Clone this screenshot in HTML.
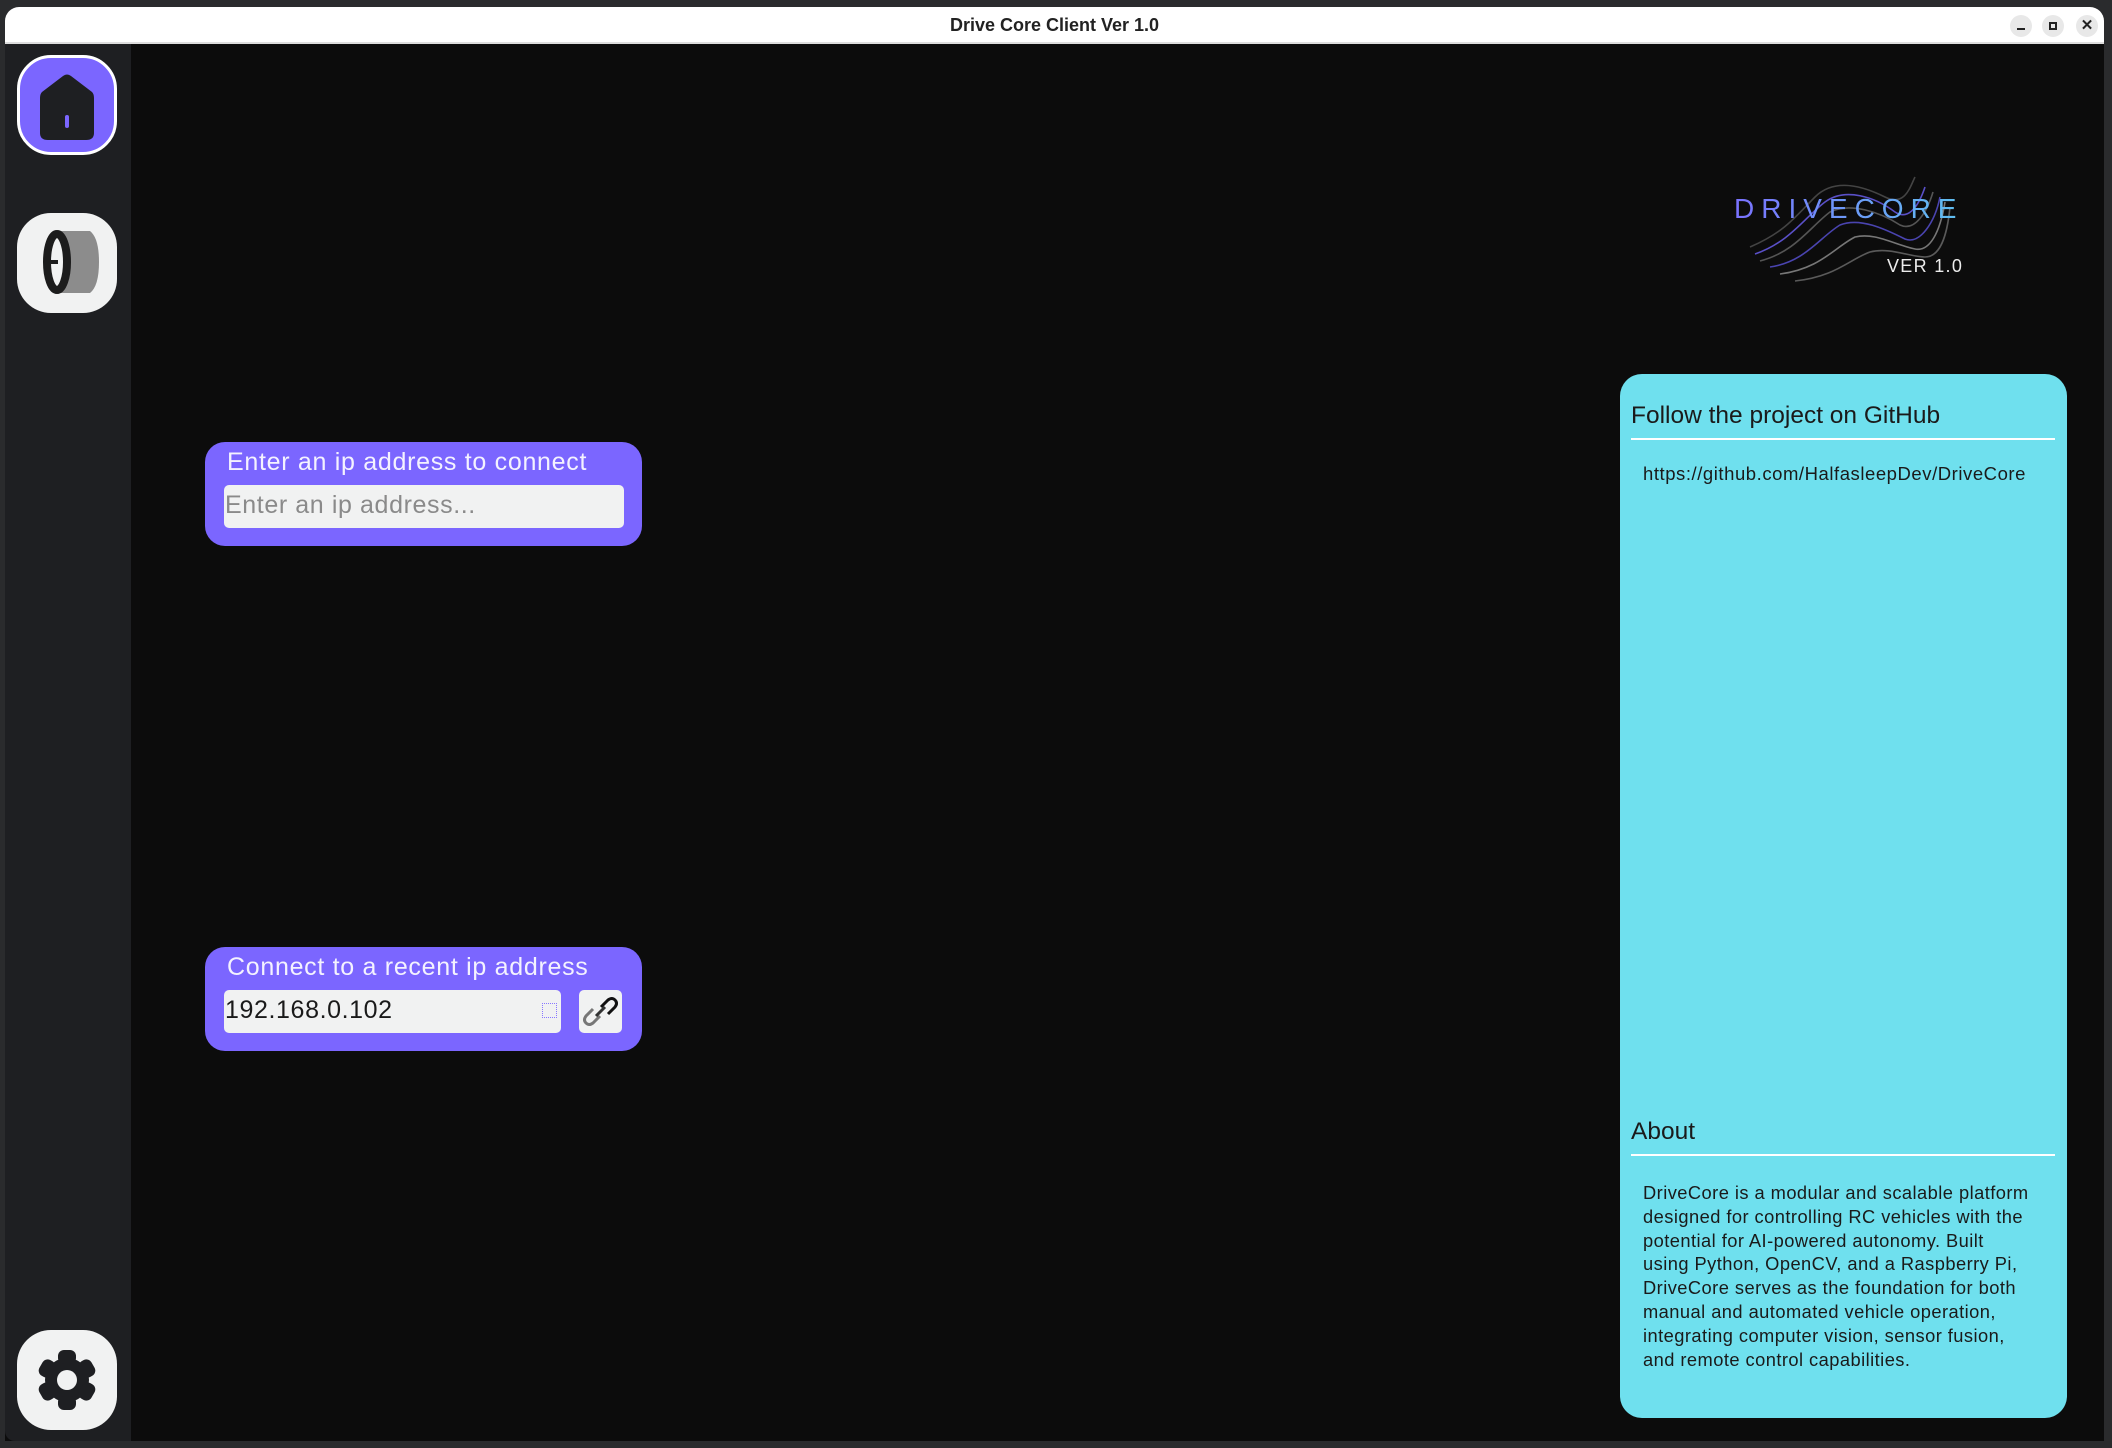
<!DOCTYPE html>
<html><head><meta charset="utf-8"><style>
*{margin:0;padding:0;box-sizing:border-box}
body{width:2112px;height:1448px;background:#2a2b2d;position:relative;overflow:hidden;font-family:"Liberation Sans",sans-serif}
.abs{position:absolute}
.win{left:5px;top:7px;width:2099px;height:1434px;background:#0c0c0c;border-radius:14px 14px 0 0;overflow:hidden}
.title{left:0;top:0;width:100%;height:37px;background:#fff;border-bottom:2px solid #ddd}
.title span{position:absolute;left:0;right:0;top:8px;text-align:center;font-weight:bold;font-size:18px;color:#222}
.wb{width:22px;height:22px;border-radius:50%;background:#e8e8e8;top:8px}
.side{left:0;top:37px;width:126px;height:1397px;background:#1e1f22;border-radius:0 0 0 10px}
.btn{width:100px;height:100px;border-radius:34px;left:12px;background:#f1f2f2}
.card{background:#7b66ff;border-radius:20px;left:200px;width:437px;height:104px}
.card .lb{position:absolute;left:22px;top:6px;color:#f4f2ff;font-size:25px;letter-spacing:0.7px}
.inp{position:absolute;left:19px;top:43px;height:43px;background:#f1f2f2;border-radius:5px;font-size:25px;padding:6px 1px;letter-spacing:0.6px}
.panel{left:1615px;top:367px;width:447px;height:1044px;background:#6fe0ee;border-radius:22px;color:#1a1a1a}
.panel h2{position:absolute;left:11px;font-weight:normal;font-size:24.5px}
.panel hr{position:absolute;left:11px;width:424px;border:0;border-top:2px solid #fff}
</style></head><body>
<div class="abs win">
 <div class="abs title"><span>Drive Core Client Ver 1.0</span>
  <div class="abs wb" style="left:2005px"><div class="abs" style="left:7px;top:13px;width:8px;height:2px;background:#222"></div></div>
  <div class="abs wb" style="left:2037px"><div class="abs" style="left:7px;top:7px;width:8px;height:8px;border:2px solid #222"></div></div>
  <div class="abs wb" style="left:2071px;text-align:center;font-size:15px;font-weight:bold;line-height:22px;color:#222">✕</div>
 </div>
 <div class="abs side">
  <div class="abs btn" style="top:11px;background:#7b66ff;border:3px solid #fff">
   <svg class="abs" style="left:0;top:0" width="94" height="94" viewBox="0 0 94 94"><path d="M22 34 L43 18 Q47 15 51 18 L72 34 Q74 36 74 40 L74 75 Q74 82 66 82 L28 82 Q20 82 20 75 L20 40 Q20 36 22 34Z" fill="#1e1f22"/><rect x="45" y="57" width="4" height="13" rx="2" fill="#7b66ff"/></svg>
  </div>
  <div class="abs btn" style="top:169px">
   <svg class="abs" style="left:0;top:0" width="100" height="100" viewBox="0 0 100 100"><path d="M42 18 L73 18 Q82 25 82 49 Q82 73 73 80 L42 80Z" fill="#8c8c8c"/><ellipse cx="40" cy="49" rx="10" ry="28" fill="#f1f2f2" stroke="#1c1c1c" stroke-width="8"/><rect x="33" y="47" width="8" height="4" fill="#1c1c1c"/></svg>
  </div>
  <div class="abs btn" style="top:1286px">
   <svg class="abs" style="left:0;top:0" width="100" height="100" viewBox="0 0 100 100"><g fill="#1e1f22"><circle cx="50" cy="50" r="22"/><g id="t"><rect x="41" y="20" width="18" height="14" rx="6"/><rect x="41" y="66" width="18" height="14" rx="6"/></g><use href="#t" transform="rotate(60 50 50)"/><use href="#t" transform="rotate(120 50 50)"/></g><circle cx="50" cy="50" r="10" fill="#f1f2f2"/></svg>
  </div>
 </div>
 <svg class="abs" style="left:1730px;top:150px" width="250" height="130" viewBox="0 0 250 130">
  <g fill="none" stroke-width="1.6">
   <path d="M15 90 C50 75 60 60 80 40 C100 20 130 30 150 40 C170 50 175 30 180 20" stroke="#444"/>
   <path d="M20 97 C55 85 70 60 90 45 C110 30 140 40 160 55 C175 65 185 45 190 30" stroke="#5a50c8"/>
   <path d="M25 104 C60 95 75 70 95 55 C115 45 145 55 165 68 C180 75 192 55 198 35" stroke="#555"/>
   <path d="M35 110 C70 105 85 80 105 68 C125 60 150 72 170 82 C185 88 200 65 205 40" stroke="#4a44b0"/>
   <path d="M45 117 C85 112 100 90 120 80 C140 75 160 88 180 92 C195 95 205 75 210 45" stroke="#777"/>
   <path d="M60 124 C100 120 115 102 135 95 C155 90 175 100 190 100 C205 100 212 80 215 50" stroke="#5a5a5a"/>
  </g>
 </svg>
 <div class="abs" style="left:1729px;top:186px;font-size:28px;letter-spacing:7px;color:#6e95f6;background:linear-gradient(90deg,#7a72ff,#5fc0f0);-webkit-background-clip:text;background-clip:text;-webkit-text-fill-color:transparent">DRIVECORE</div>
 <div class="abs" style="left:1882px;top:249px;font-size:18px;letter-spacing:1.3px;color:#ececec">VER 1.0</div>

 <div class="abs card" style="top:435px">
  <div class="lb">Enter an ip address to connect</div>
  <div class="inp" style="width:400px;color:#8a8a8a">Enter an ip address...</div>
 </div>
 <div class="abs card" style="top:940px">
  <div class="lb">Connect to a recent ip address</div>
  <div class="inp" style="width:337px;color:#1a1a1a">192.168.0.102
   <div class="abs" style="right:4px;top:13px;width:15px;height:15px;border:1px dotted #8878ff"></div></div>
  <div class="inp" style="left:374px;width:43px;padding:0">
   <svg width="43" height="43" viewBox="0 0 43 43" fill="none" stroke-width="3"><path d="M22 17 L29 10 Q33 7 36 10 Q39 13 36 17 L29 24" stroke="#111"/><path d="M21 26 L14 33 Q10 36 7 33 Q4 30 7 26 L14 19" stroke="#777"/><path d="M17 26 L26 17" stroke="#333"/></svg>
  </div>
 </div>

 <div class="abs panel">
  <h2 style="top:28px">Follow the project on GitHub</h2>
  <hr style="top:64px">
  <div class="abs" style="left:23px;top:89px;font-size:18.5px;letter-spacing:0.55px">https://github.com/HalfasleepDev/DriveCore</div>
  <h2 style="top:744px">About</h2>
  <hr style="top:780px">
  <div class="abs" style="left:23px;top:807px;width:430px;font-size:18.3px;line-height:23.8px;letter-spacing:0.45px;white-space:nowrap">DriveCore is a modular and scalable platform<br>designed for controlling RC vehicles with the<br>potential for AI-powered autonomy. Built<br>using Python, OpenCV, and a Raspberry Pi,<br>DriveCore serves as the foundation for both<br>manual and automated vehicle operation,<br>integrating computer vision, sensor fusion,<br>and remote control capabilities.</div>
 </div>
</div>
</body></html>
